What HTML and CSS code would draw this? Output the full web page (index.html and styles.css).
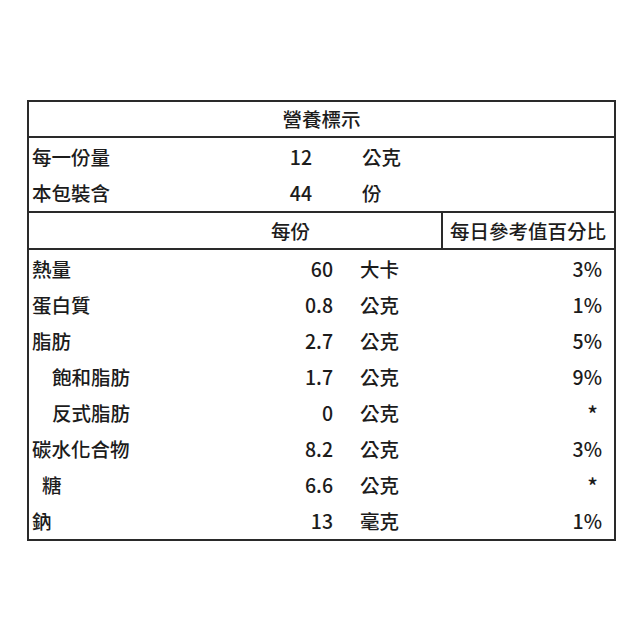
FILE: index.html
```html
<!DOCTYPE html>
<html lang="zh-Hant">
<head>
<meta charset="utf-8">
<link rel="stylesheet" href="styles.css">
</head>
<body>
<div class="label">
  <div class="title">營養標示</div>
  <div class="serving">
    <div class="srow"><span class="name">每一份量</span><span class="num">12</span><span class="unit">公克</span></div>
    <div class="srow"><span class="name">本包裝含</span><span class="num">44</span><span class="unit">份</span></div>
  </div>
  <div class="head">
    <div class="hleft">每份</div>
    <div class="hright">每日參考值百分比</div>
  </div>
  <div class="nutrients">
    <div class="nrow"><span class="name">熱量</span><span class="num">60</span><span class="unit">大卡</span><span class="pct">3%</span></div>
    <div class="nrow"><span class="name">蛋白質</span><span class="num">0.8</span><span class="unit">公克</span><span class="pct">1%</span></div>
    <div class="nrow"><span class="name">脂肪</span><span class="num">2.7</span><span class="unit">公克</span><span class="pct">5%</span></div>
    <div class="nrow"><span class="name indent2">飽和脂肪</span><span class="num">1.7</span><span class="unit">公克</span><span class="pct">9%</span></div>
    <div class="nrow"><span class="name indent2">反式脂肪</span><span class="num">0</span><span class="unit">公克</span><span class="pct star">*</span></div>
    <div class="nrow"><span class="name">碳水化合物</span><span class="num">8.2</span><span class="unit">公克</span><span class="pct">3%</span></div>
    <div class="nrow"><span class="name indent1">糖</span><span class="num">6.6</span><span class="unit">公克</span><span class="pct star">*</span></div>
    <div class="nrow"><span class="name">鈉</span><span class="num">13</span><span class="unit">毫克</span><span class="pct">1%</span></div>
  </div>
</div>
</body>
</html>
```

FILE: styles.css
```css
* { box-sizing: border-box; }
html, body { background: #ffffff; }
body {
  margin: 0;
  padding: 100px 0 0 27px;
  font-family: "Noto Sans CJK TC", "Noto Sans", sans-serif;
  font-size: 19.5px;
  font-weight: 500;
  color: #1c1c1c;
}
.label {
  width: 589px;
  height: 441px;
  border: 2px solid #2a2a2a;
  display: flex;
  flex-direction: column;
}
.title {
  height: 36px;
  line-height: 34px;
  text-align: center;
  border-bottom: 2px solid #2a2a2a;
}
.serving {
  height: 75px;
  padding-top: 1px;
  border-bottom: 2px solid #2a2a2a;
}
.srow {
  height: 36px;
  line-height: 36px;
  display: grid;
  grid-template-columns: 200px 83px 1fr;
}
.name { padding-left: 3px; white-space: nowrap; }
.indent1 { padding-left: 13px; }
.indent2 { padding-left: 23px; }
.num { text-align: right; }
.srow .unit { padding-left: 50px; }
.head {
  height: 37px;
  line-height: 35px;
  display: flex;
  border-bottom: 2px solid #2a2a2a;
}
.hleft {
  width: 414px;
  text-align: right;
  padding-right: 131px;
  border-right: 2px solid #2a2a2a;
}
.hright {
  flex: 1;
  text-align: right;
  padding-right: 8px;
}
.nutrients {
  flex: 1;
  display: flex;
  flex-direction: column;
}
.nrow {
  flex: 1;
  display: grid;
  grid-template-columns: 200px 104px 60px 1fr;
  align-items: center;
}
.nrow .unit { padding-left: 27px; white-space: nowrap; }
.pct { text-align: right; padding-right: 12px; }
.star { padding-right: 16px; font-size: 22px; line-height: 1; }
```
